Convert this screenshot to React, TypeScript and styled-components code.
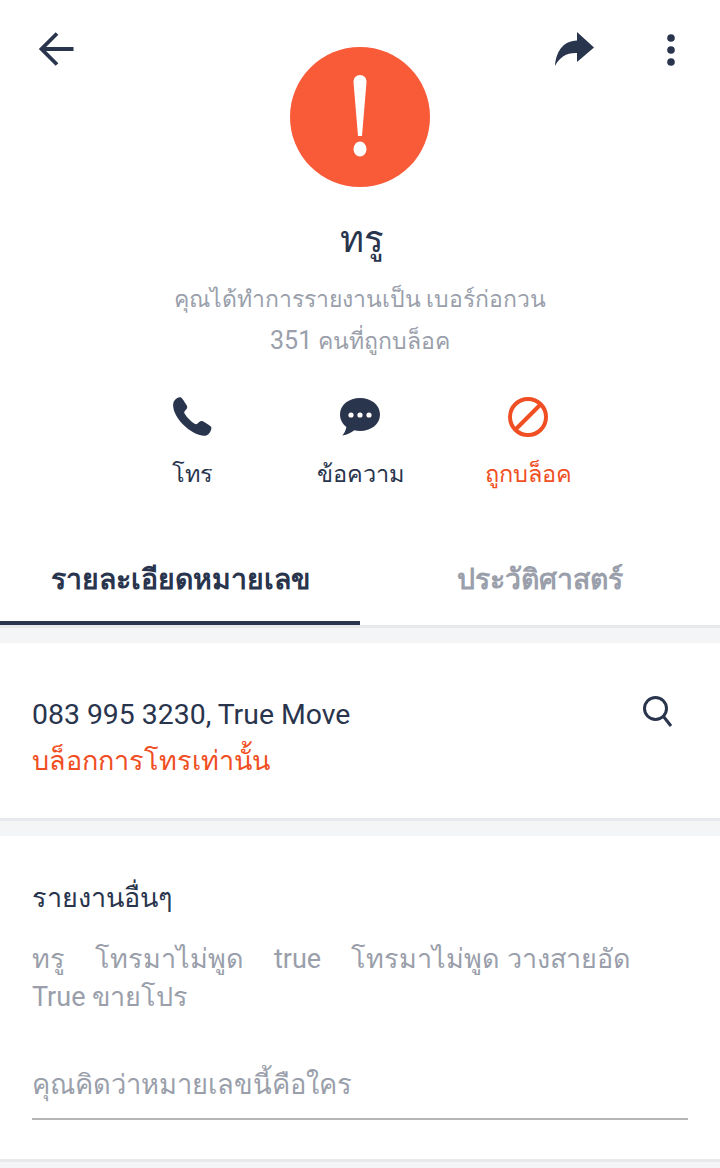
import React from "react";
import styled, { createGlobalStyle } from "styled-components";

const navy = "#29344d";
const grey = "#9a9fab";
const red = "#f04e23";

const Global = createGlobalStyle`
  html, body { margin: 0; padding: 0; background: #f4f5f7; }
  body { font-family: Roboto, "Noto Sans", sans-serif; font-weight: 400; }
`;

const Page = styled.div`
  width: 720px;
  height: 1168px;
  overflow: hidden;
  display: flex;
  flex-direction: column;
  background: #f4f5f7;
`;

const Header = styled.header`
  position: relative;
  background: #fff;
  box-sizing: border-box;
  padding-top: 47px;
  display: flex;
  flex-direction: column;
  align-items: center;
  border-bottom: 3px solid #e8e9ec;
  height: 628px;
  flex: none;
`;

const TopIcon = styled.button<{ $left: number }>`
  position: absolute;
  left: ${(p) => p.$left}px;
  top: 26px;
  width: 46px;
  height: 46px;
  padding: 0;
  border: 0;
  background: none;
  display: flex;
  align-items: center;
  justify-content: center;
`;

const Avatar = styled.div`
  width: 140px;
  height: 140px;
  border-radius: 50%;
  background: #f95a38;
  display: flex;
  align-items: center;
  justify-content: center;
  flex: none;
`;

const Name = styled.h1`
  margin: 28px 0 0;
  padding-left: 3px;
  height: 50px;
  font-size: 36.5px;
  line-height: 50px;
  font-weight: 400;
  color: ${navy};
`;

const Sub = styled.div`
  margin-top: 14px;
  font-size: 23px;
  line-height: 41px;
  text-align: center;
  color: ${grey};
`;

const Digits = styled.span`
  font-size: 25px;
`;

const Actions = styled.div`
  margin-top: 33px;
  display: grid;
  grid-template-columns: repeat(3, 168px);
  justify-items: center;
`;

const Action = styled.div<{ $red?: boolean }>`
  display: flex;
  flex-direction: column;
  align-items: center;
  color: ${(p) => (p.$red ? red : navy)};
  font-size: 23.5px;
  line-height: 34px;
`;

const ActionIcon = styled.div`
  width: 44px;
  height: 44px;
  margin-bottom: 18px;
  display: flex;
  align-items: center;
  justify-content: center;
`;

const Tabs = styled.nav`
  position: absolute;
  left: 0;
  right: 0;
  bottom: 0;
  height: 90px;
  display: grid;
  grid-template-columns: 1fr 1fr;
`;

const Tab = styled.div<{ $active?: boolean }>`
  display: flex;
  align-items: center;
  justify-content: center;
  padding-top: 2px;
  box-sizing: border-box;
  font-size: 28.4px;
  font-weight: 700;
  color: ${(p) => (p.$active ? navy : grey)};
  border-bottom: 4px solid ${(p) => (p.$active ? navy : "transparent")};
`;

const Card = styled.section<{ $h: number }>`
  margin-top: 15px;
  height: ${(p) => p.$h}px;
  box-sizing: border-box;
  background: #fff;
  border-bottom: 3px solid #e8e9ec;
  padding: 0 32px;
  flex: none;
`;

const NumberRow = styled.div`
  display: flex;
  justify-content: space-between;
  align-items: flex-start;
  padding-top: 53px;
  padding-right: 14px;
`;

const NumberText = styled.div`
  font-size: 28.4px;
  line-height: 38px;
  color: ${navy};
`;

const SearchIcon = styled.svg`
  margin-top: -1px;
`;

const RedText = styled.div`
  margin-top: 4px;
  font-size: 27px;
  line-height: 46px;
  color: ${red};
`;

const SectionTitle = styled.div`
  padding-top: 42px;
  font-size: 27px;
  line-height: 40px;
  color: ${navy};
`;

const Tags = styled.div`
  margin-top: 22px;
  display: flex;
  flex-wrap: wrap;
  column-gap: 30px;
  font-size: 27px;
  line-height: 38px;
  color: ${grey};
`;

const Field = styled.div`
  margin-top: 41px;
  height: 63px;
  box-sizing: border-box;
  border-bottom: 2px solid #b5b5b5;
  font-size: 27.3px;
  line-height: 56px;
  color: ${grey};
`;

export default function App() {
  return (
    <Page>
      <Global />
      <Header>
        <TopIcon $left={33} aria-label="back">
          <svg width="46" height="46" viewBox="0 0 46 46" fill="none" stroke={navy} strokeWidth="3.8">
            <path d="M40.500 23H10M24 7.500L8.500 23 24 38.500" />
          </svg>
        </TopIcon>
        <TopIcon $left={552} aria-label="share">
          <svg width="46" height="46" viewBox="0 0 46 46" fill={navy}>
            <path d="M25 6l17 15.500L25 36V27C15 26.500 7.500 31 3 40 4 27 10 15 25 14.500z" />
          </svg>
        </TopIcon>
        <TopIcon $left={648} aria-label="more">
          <svg width="46" height="46" viewBox="0 0 46 46" fill={navy}>
            <circle cx="23" cy="12" r="3.800" />
            <circle cx="23" cy="24" r="3.800" />
            <circle cx="23" cy="36" r="3.800" />
          </svg>
        </TopIcon>
        <Avatar>
          <svg width="24" height="84" viewBox="0 0 24 84" fill="#fff">
            <path d="M12 0c4 0 6.500 3 6.500 7L14 61h-4L5.500 7C5.500 3 8 0 12 0z" />
            <ellipse cx="12" cy="74" rx="6.500" ry="7.500" />
          </svg>
        </Avatar>
        <Name>ทรู</Name>
        <Sub>
          คุณได้ทำการรายงานเป็น เบอร์ก่อกวน
          <br />
          <Digits>351</Digits> คนที่ถูกบล็อค
        </Sub>
        <Actions>
          <Action>
            <ActionIcon>
              <svg width="44" height="44" viewBox="0 0 44 44" fill={navy}>
                <path d="M4.500 5.500C6 3.500 9 1.500 11 2.500c1.500 1 5 6.500 6 8.500 .8 1.800-.5 3.200-1.800 4.500-1 1-1.200 2-.5 3.300 2.500 4 6 7.600 9.800 10 1.500.8 2.400.5 3.300-.5 1.500-1.700 3-3 5-2 2.500 1.300 7 4 8.300 5.500 1 1.500-.5 5.500-2.800 7.500-2 1.800-5 2-8.500 .8C17 36 5.500 23.500 3.500 13.500 2.800 10 3 7.500 4.500 5.500z" />
              </svg>
            </ActionIcon>
            โทร
          </Action>
          <Action>
            <ActionIcon>
              <svg width="44" height="44" viewBox="0 0 44 44" fill={navy}>
                <path d="M22 3c11 0 20 6.800 20 16.500S33 36 22 36c-2 0-4-.2-5.800-.7-3 2.500-7 4.700-12 5.200 1.800-1.800 3.600-5 4.200-8.500C4.500 29 2 24.500 2 19.500 2 9.800 11 3 22 3z" />
                <circle cx="13" cy="20" r="2.600" fill="#fff" />
                <circle cx="22" cy="20" r="2.600" fill="#fff" />
                <circle cx="31" cy="20" r="2.600" fill="#fff" />
              </svg>
            </ActionIcon>
            ข้อความ
          </Action>
          <Action $red>
            <ActionIcon>
              <svg width="44" height="44" viewBox="0 0 44 44" fill="none" stroke={red} strokeWidth="4">
                <circle cx="22" cy="22" r="18" />
                <path d="M35 9L9 35" />
              </svg>
            </ActionIcon>
            ถูกบล็อค
          </Action>
        </Actions>
        <Tabs>
          <Tab $active>รายละเอียดหมายเลข</Tab>
          <Tab>ประวัติศาสตร์</Tab>
        </Tabs>
      </Header>
      <Card $h={178}>
        <NumberRow>
          <NumberText>083 995 3230, True Move</NumberText>
          <SearchIcon width="32" height="34" viewBox="0 0 32 34" fill="none" stroke={navy} strokeWidth="3">
            <circle cx="13.500" cy="13.500" r="11" />
            <path d="M21.500 21.500L29 31" />
          </SearchIcon>
        </NumberRow>
        <RedText>บล็อกการโทรเท่านั้น</RedText>
      </Card>
      <Card $h={326}>
        <SectionTitle>รายงานอื่นๆ</SectionTitle>
        <Tags>
          <span>ทรู</span>
          <span>โทรมาไม่พูด</span>
          <span>true</span>
          <span>โทรมาไม่พูด วางสายอัด</span>
          <span>True ขายโปร</span>
        </Tags>
        <Field>คุณคิดว่าหมายเลขนี้คือใคร</Field>
      </Card>
    </Page>
  );
}
